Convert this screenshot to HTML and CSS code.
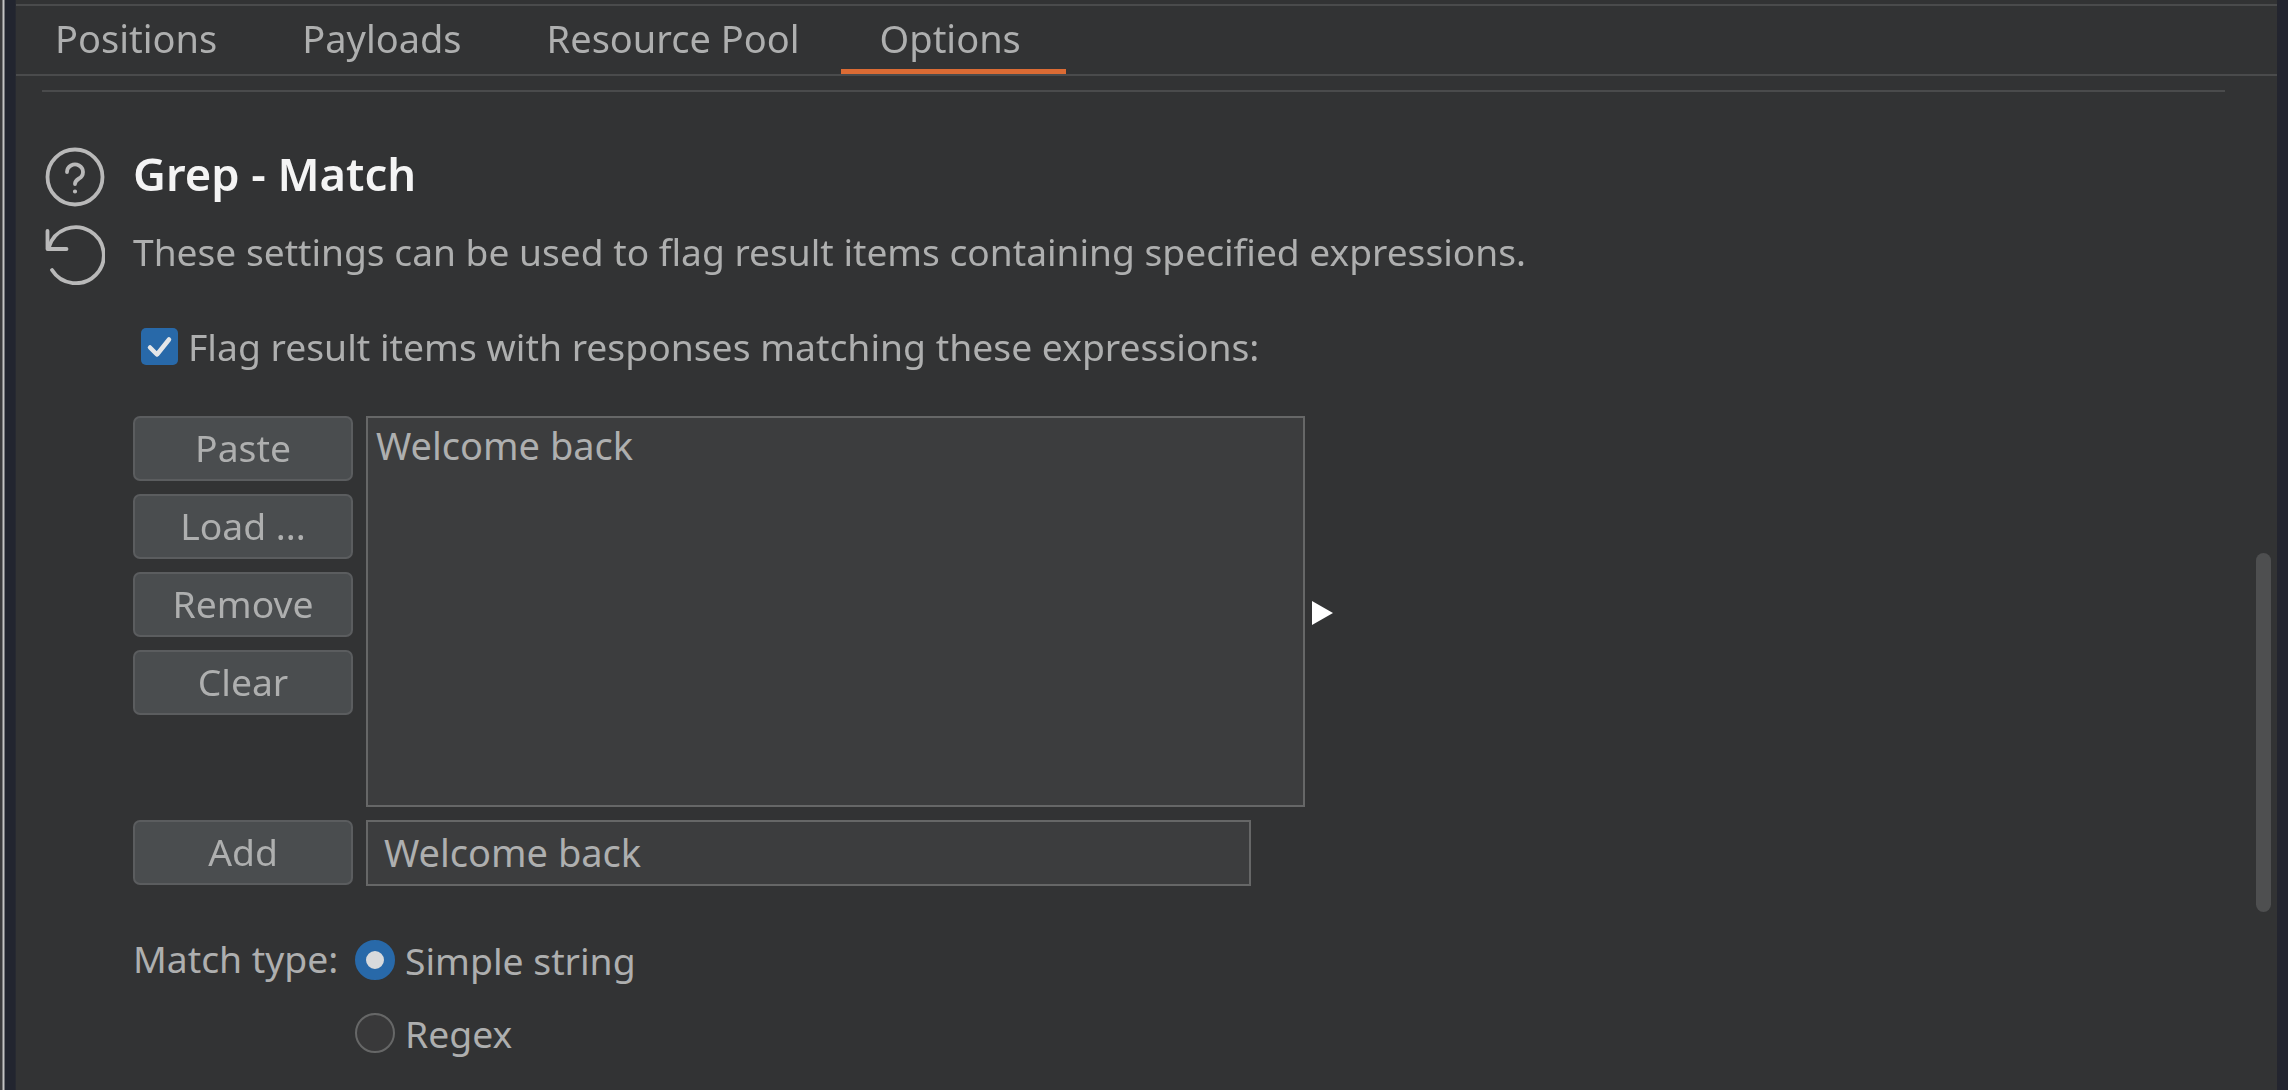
FILE: index.html
```html
<!DOCTYPE html>
<html lang="en">
<head>
<meta charset="utf-8">
<title>Grep - Match</title>
<link rel="stylesheet" href="styles.css">
</head>
<body>
<div class="window">
  <div class="edge-left"></div>
  <main class="main">
    <nav class="tabs">
      <span class="tab">Positions</span>
      <span class="tab">Payloads</span>
      <span class="tab">Resource Pool</span>
      <span class="tab active">Options</span>
    </nav>
    <div class="rule"></div>
    <section class="section">
      <div class="icons">
        <svg class="icon" viewBox="0 0 60 60" fill="none" stroke="#b9b9b9" stroke-width="3.800" stroke-linecap="round" stroke-linejoin="round">
          <circle cx="30" cy="30" r="27.500"/>
          <path d="M22 25a8 7.500 0 1 1 12 6.500c-3 1.800-4 3-4 5.500"/>
          <circle cx="30" cy="44.500" r="1.400" fill="#b9b9b9" stroke-width="1.400"/>
        </svg>
        <svg class="icon undo" viewBox="0 0 60 60" fill="none" stroke="#b9b9b9" stroke-width="3.800" stroke-linecap="round" stroke-linejoin="round">
          <path d="M4 22A28 28 0 1 1 7 45"/>
          <path d="M2.500 6v18h19"/>
        </svg>
      </div>
      <div class="body">
        <h2 class="title">Grep - Match</h2>
        <p class="desc">These settings can be used to flag result items containing specified expressions.</p>
        <label class="check-row"><span class="checkbox"><svg viewBox="0 0 37 37" fill="none" stroke="#e4e6e8" stroke-width="4.500" stroke-linecap="round" stroke-linejoin="round"><path d="M9 19.500l7 7 12-15"/></svg></span><span>Flag result items with responses matching these expressions:</span></label>
        <div class="list-row">
          <div class="btns">
            <button class="btn">Paste</button>
            <button class="btn">Load ...</button>
            <button class="btn">Remove</button>
            <button class="btn">Clear</button>
          </div>
          <div class="listbox">Welcome back</div>
          <div class="arrow"></div>
        </div>
        <div class="add-row">
          <button class="btn">Add</button>
          <div class="input">Welcome back</div>
        </div>
        <div class="match">
          <span class="match-label">Match type:</span>
          <div class="radios">
            <label class="radio-row"><span class="radio on"></span><span>Simple string</span></label>
            <label class="radio-row"><span class="radio"></span><span>Regex</span></label>
          </div>
        </div>
      </div>
    </section>
    <div class="scrollbar"></div>
  </main>
  <div class="edge-right"></div>
</div>
</body>
</html>
```
FILE: styles.css
```css
* { box-sizing: border-box; }
html, body { margin: 0; height: 100%; overflow: hidden; background: #323334; }
body { font-family: "Noto Sans", sans-serif; font-size: 37.3px; color: #aeafaf; }
.window { display: flex; height: 1090px; }
.edge-left { width: 16px; background: linear-gradient(90deg, #3a3a3c 0, #3a3a3c 2px, #c4c4c4 3px, #c4c4c4 4px, #22252f 5px, #22252f 15px, #2c2e33 16px); }
.edge-right { width: 11px; background: #23252f; }
.main { flex: 1; position: relative; padding-top: 4px; min-width: 0; }
.tabs { display: flex; gap: 6px; height: 72px; border-top: 2px solid #4a4b4c; border-bottom: 2px solid #4a4b4c; font-size: 38px; }
.tab { padding: 0 40px 0 39px; line-height: 64px; height: 68px; white-space: nowrap; filter: blur(.5px); }
.tab.active { margin-left: -5px; padding-right: 45px; border-bottom: 5px solid #db6b34; }
.rule { height: 2px; margin: 14px 52px 0 26px; background: #4a4b4c; }
.section { display: flex; padding: 55px 0 0 29px; }
.icons { width: 88px; display: flex; flex-direction: column; gap: 18px; flex: none; }
.icon { width: 60px; height: 60px; display: block; filter: blur(.4px); }
.body { display: flex; flex-direction: column; min-width: 0; }
.title { margin: -3px 0 0; font-size: 45.3px; line-height: 60px; font-weight: 600; color: #f4f4f4; filter: blur(.4px); }
.desc { margin: 26px 0 0; font-size: 37.15px; line-height: 44px; white-space: nowrap; filter: blur(.5px); }
.check-row { display: flex; align-items: center; gap: 10px; margin: 50px 0 0 8px; height: 44px; white-space: nowrap; }
.check-row > span:last-child { filter: blur(.5px); }
.checkbox { width: 37px; height: 37px; border-radius: 5px; background: #2869a9; flex: none; }
.checkbox svg { display: block; width: 37px; height: 37px; }
.list-row { display: flex; gap: 13px; margin-top: 48px; align-items: flex-start; }
.btns { display: flex; flex-direction: column; gap: 13px; flex: none; }
.btn { display: block; width: 220px; height: 65px; padding: 0 0 2px; font: inherit; color: inherit; background: #4a4d4f; border: 2px solid #5b5d5f; border-radius: 7px; filter: blur(.3px); }
.listbox { width: 939px; height: 391px; padding: 0 8px; line-height: 54px; font-size: 38px; background: #3c3d3e; border: 2px solid #666767; }
.arrow { width: 0; height: 0; margin: 185px 0 0 -6px; border-left: 21px solid #fff; border-top: 12px solid transparent; border-bottom: 12px solid transparent; }
.add-row { display: flex; gap: 13px; margin-top: 13px; }
.input { width: 885px; height: 66px; padding: 0 16px; line-height: 60px; font-size: 38px; background: #3c3d3e; border: 2px solid #666767; }
.match { display: flex; margin-top: 54px; }
.match-label { width: 222px; line-height: 38px; flex: none; white-space: nowrap; }
.radios { display: flex; flex-direction: column; gap: 33px; }
.radio-row { display: flex; align-items: center; gap: 10px; height: 40px; }
.radio { width: 40px; height: 40px; border-radius: 50%; background: #39393a; border: 2px solid #666767; flex: none; }
.radio.on { background: #d8dadc; border: 11px solid #2869a9; }
.scrollbar { position: absolute; top: 553px; right: 6px; width: 15px; height: 359px; border-radius: 8px; background: #4e4f50; }
```
